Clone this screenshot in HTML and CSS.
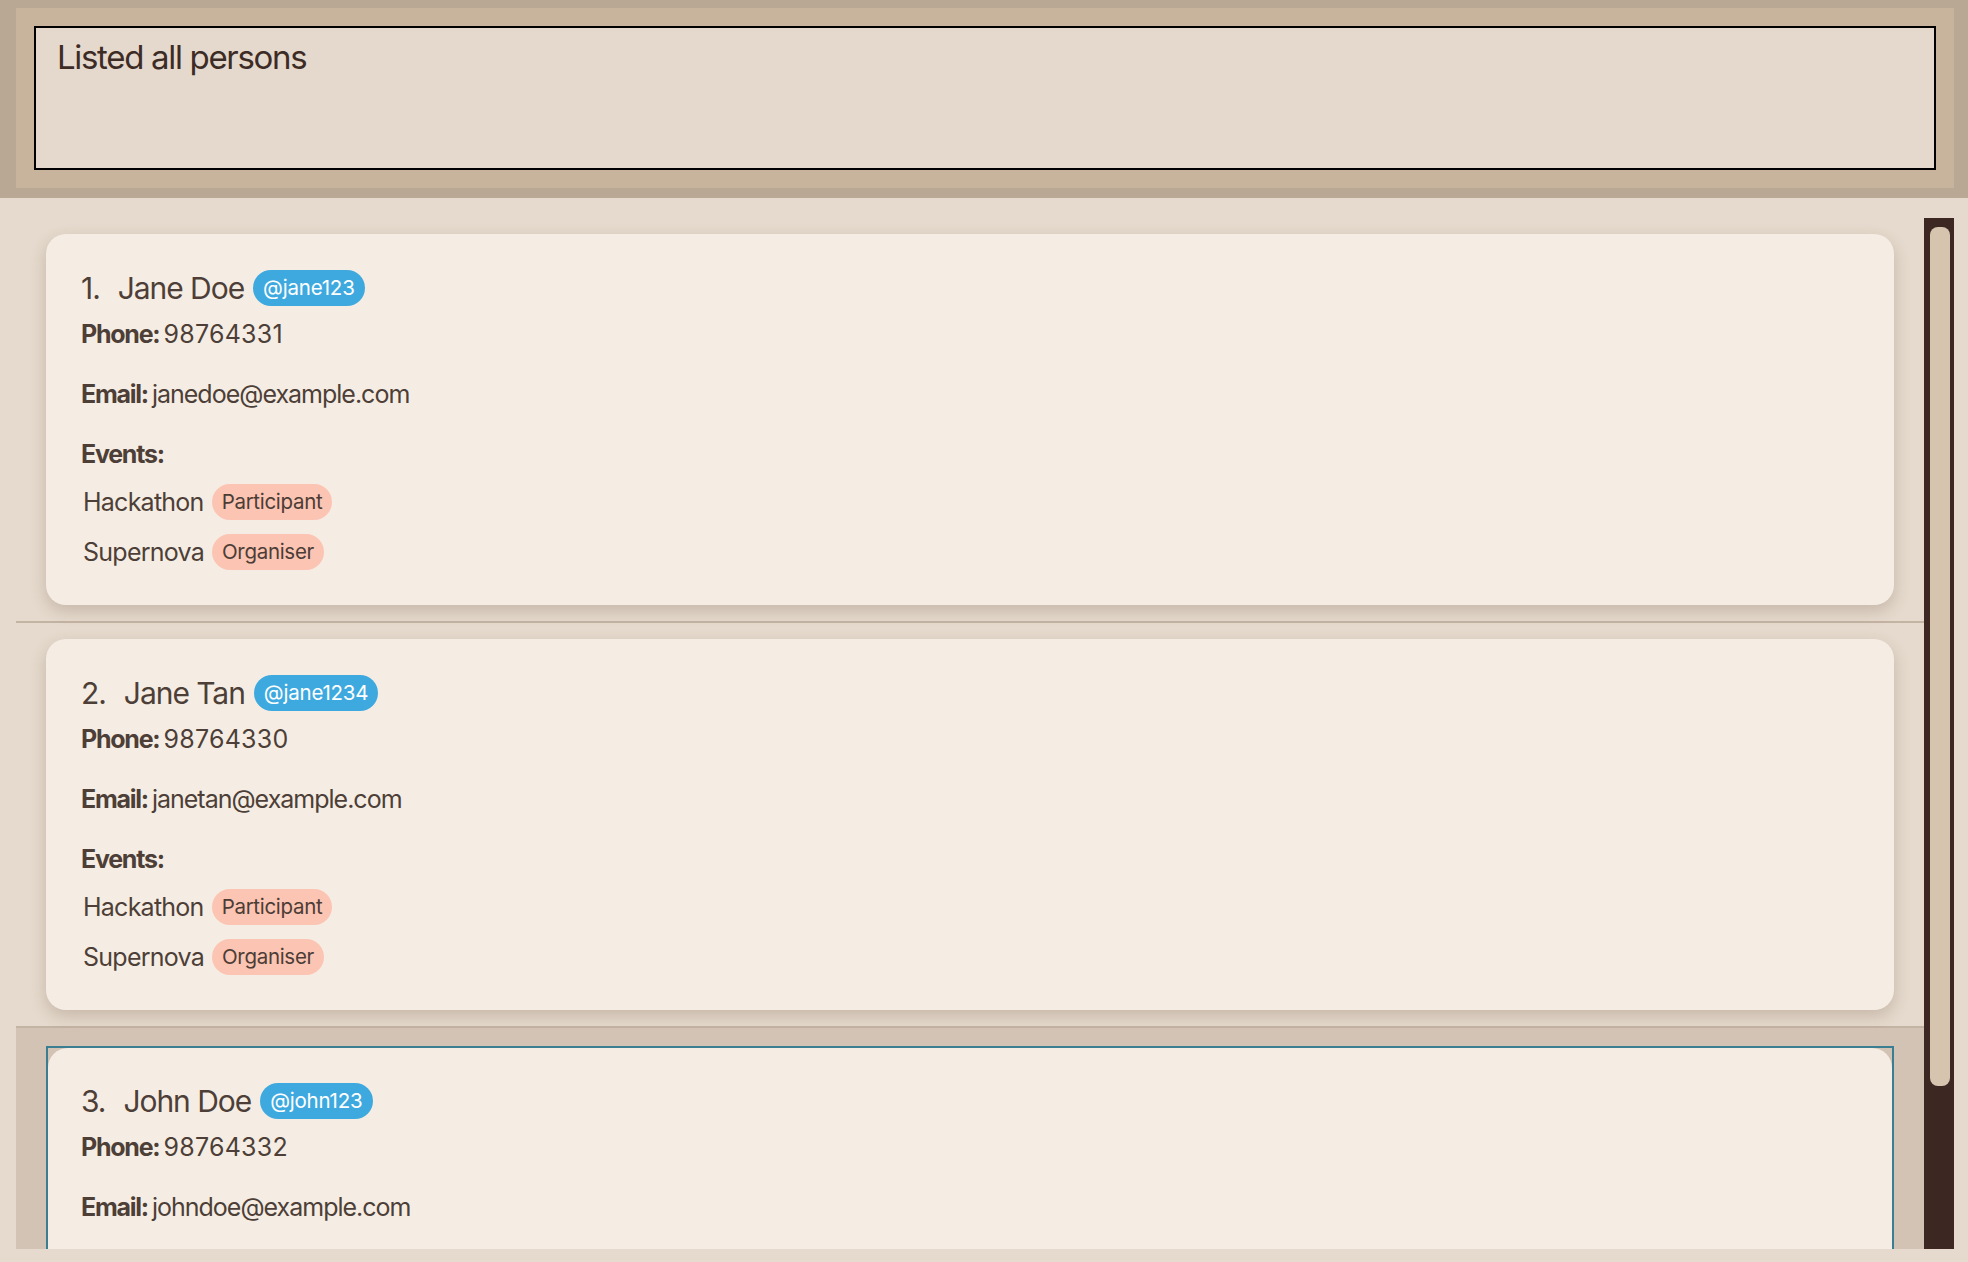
FILE: index.html
```html
<!DOCTYPE html>
<html>
<head>
<meta charset="utf-8">
<link rel="stylesheet" href="styles.css">
</head>
<body>
<div class="header">
  <div class="header-inner">
    <div class="result-box">Listed all persons</div>
  </div>
</div>
<div class="main">
  <div class="list">
    <div class="cell">
      <div class="card">
        <div class="name-row"><span class="idx">1.</span><span class="name">Jane Doe</span><span class="handle">@jane123</span></div>
        <div class="line first"><b>Phone:</b><span class="val num">98764331</span></div>
        <div class="line"><b>Email:</b><span class="val">janedoe@example.com</span></div>
        <div class="line"><b>Events:</b></div>
        <div class="event ev1"><span class="ev-name">Hackathon</span><span class="role">Participant</span></div>
        <div class="event"><span class="ev-name">Supernova</span><span class="role">Organiser</span></div>
      </div>
    </div>
    <div class="cell">
      <div class="card">
        <div class="name-row"><span class="idx">2.</span><span class="name">Jane Tan</span><span class="handle">@jane1234</span></div>
        <div class="line first"><b>Phone:</b><span class="val num">98764330</span></div>
        <div class="line"><b>Email:</b><span class="val">janetan@example.com</span></div>
        <div class="line"><b>Events:</b></div>
        <div class="event ev1"><span class="ev-name">Hackathon</span><span class="role">Participant</span></div>
        <div class="event"><span class="ev-name">Supernova</span><span class="role">Organiser</span></div>
      </div>
    </div>
    <div class="cell selected">
      <div class="frame">
        <div class="card">
          <div class="name-row"><span class="idx">3.</span><span class="name">John Doe</span><span class="handle">@john123</span></div>
          <div class="line first"><b>Phone:</b><span class="val num">98764332</span></div>
          <div class="line"><b>Email:</b><span class="val">johndoe@example.com</span></div>
          <div class="line"><b>Events:</b></div>
          <div class="event ev1"><span class="ev-name">Hackathon</span><span class="role">Participant</span></div>
          <div class="event"><span class="ev-name">Supernova</span><span class="role">Organiser</span></div>
        </div>
      </div>
    </div>
  </div>
  <div class="scrollbar"><div class="thumb"></div></div>
</div>
</body>
</html>
```
FILE: styles.css
```css
html, body {
  margin: 0;
  padding: 0;
}
body {
  width: 1968px;
  height: 1262px;
  overflow: hidden;
  background: #e4d8cc;
  font-family: Inter, "Noto Sans", sans-serif;
  color: #4d3f37;
}
.header {
  background: #b8a894;
  padding: 8px 14px 10px 16px;
}
.header-inner {
  background: #c8b49c;
  padding: 18px;
}
.result-box {
  box-sizing: border-box;
  height: 144px;
  border: 2px solid #000;
  background: #e5d9cd;
  padding: 9px 21px;
  font-size: 33px;
  letter-spacing: -0.04em;
  color: #3d2c26;
}
.main {
  display: flex;
  padding: 20px 14px 13px 16px;
  height: 1031px;
  background: #e5dacd;
}
.list {
  flex: 1;
  overflow: hidden;
}
.cell {
  padding: 16px 30px;
  border-bottom: 2px solid #c4b4a4;
}
.cell.selected {
  background: #d3c3b4;
  padding-top: 18px;
}
.card {
  background: #f5ede4;
  border-radius: 20px;
  padding: 36px 35px 35px 35px;
  box-shadow: 0 6px 16px rgba(90, 60, 40, 0.22);
}
.frame {
  border: 2px solid #3b7d93;
}
.frame .card {
  padding-top: 35px;
  padding-left: 33px;
  box-shadow: none;
}
.name-row {
  display: flex;
  align-items: center;
  height: 36px;
  font-size: 30px;
  letter-spacing: -0.035em;
}
.idx {
  margin-right: 18px;
}
.name {
  margin-right: 9px;
}
.handle {
  background: #3ea9df;
  color: #fff;
  font-size: 20.5px;
  letter-spacing: -0.01em;
  height: 36px;
  line-height: 36px;
  padding: 0 10px;
  border-radius: 18px;
}
.line {
  font-size: 25px;
  line-height: 30px;
  margin-top: 30px;
  letter-spacing: -0.04em;
}
.line.first {
  margin-top: 13px;
}
.line b {
  font-weight: 700;
  letter-spacing: -0.05em;
}
.val {
  margin-left: 4px;
}
.val.num {
  letter-spacing: 0.01em;
}
.event {
  display: flex;
  align-items: center;
  height: 36px;
  font-size: 25px;
  letter-spacing: -0.03em;
  margin-top: 14px;
  padding-left: 2px;
}
.event.ev1 {
  margin-top: 15px;
}
.ev-name {
  margin-right: 8px;
}
.role {
  background: #fcc4b2;
  color: #4b3d36;
  font-size: 20.5px;
  letter-spacing: -0.015em;
  height: 36px;
  line-height: 36px;
  padding: 0 10px;
  border-radius: 18px;
}
.scrollbar {
  width: 30px;
  background: #3d2722;
  padding: 9px 4px 0 6px;
  box-sizing: border-box;
}
.thumb {
  height: 859px;
  background: #d6c4af;
  border-radius: 8px;
}
```
